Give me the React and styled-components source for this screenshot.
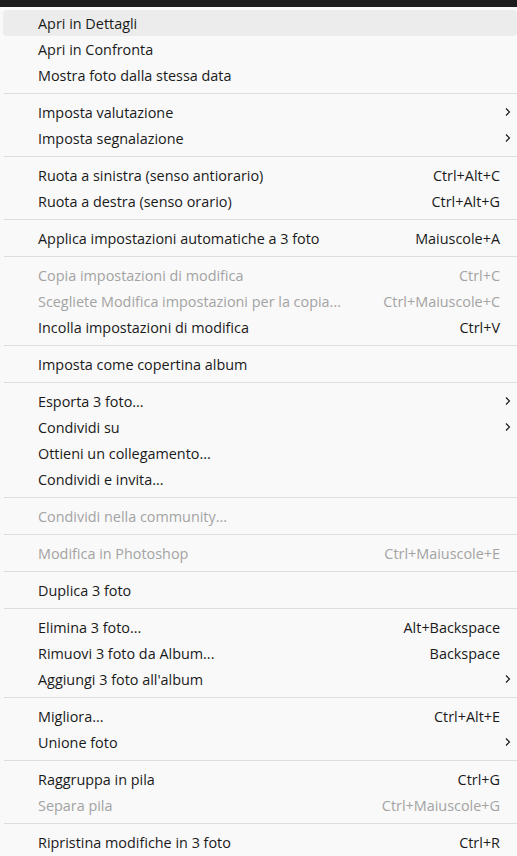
import React from "react";
import styled, { createGlobalStyle } from "styled-components";

const GlobalStyle = createGlobalStyle`
  html, body {
    margin: 0;
    padding: 0;
    background: #f9f9f9;
  }
  body {
    font-family: "Open Sans", "Noto Sans", sans-serif;
  }
`;

const TopBar = styled.div`
  height: 7px;
  background: #1c1c1c;
`;

const Menu = styled.div`
  display: flex;
  flex-direction: column;
  padding-top: 3px;
  background: #f9f9f9;
`;

const Row = styled.div`
  display: flex;
  align-items: center;
  height: 26px;
  margin-left: 3px;
  padding-left: 35px;
  border-radius: 4px;
  font-size: 14.4px;
  color: ${(p) => (p.disabled ? "#a3a3a3" : "#1a1a1a")};
  background: ${(p) => (p.active ? "#ececec" : "transparent")};
`;

const Label = styled.span`
  flex: 1;
  white-space: nowrap;
`;

const Shortcut = styled.span`
  margin-right: 17px;
  white-space: nowrap;
`;

const Chevron = styled.svg`
  width: 8px;
  height: 10px;
  margin-right: 5px;
  color: #1a1a1a;
`;

const Separator = styled.div`
  height: 11px;
  display: flex;
  align-items: center;
  margin-left: 4px;

  &::after {
    content: "";
    flex: 1;
    height: 1px;
    background: #dedede;
  }
`;

const groups = [
  [
    { label: "Apri in Dettagli", active: true },
    { label: "Apri in Confronta" },
    { label: "Mostra foto dalla stessa data" },
  ],
  [
    { label: "Imposta valutazione", sub: true },
    { label: "Imposta segnalazione", sub: true },
  ],
  [
    { label: "Ruota a sinistra (senso antiorario)", key: "Ctrl+Alt+C" },
    { label: "Ruota a destra (senso orario)", key: "Ctrl+Alt+G" },
  ],
  [{ label: "Applica impostazioni automatiche a 3 foto", key: "Maiuscole+A" }],
  [
    { label: "Copia impostazioni di modifica", key: "Ctrl+C", disabled: true },
    {
      label: "Scegliete Modifica impostazioni per la copia...",
      key: "Ctrl+Maiuscole+C",
      disabled: true,
    },
    { label: "Incolla impostazioni di modifica", key: "Ctrl+V" },
  ],
  [{ label: "Imposta come copertina album" }],
  [
    { label: "Esporta 3 foto...", sub: true },
    { label: "Condividi su", sub: true },
    { label: "Ottieni un collegamento..." },
    { label: "Condividi e invita..." },
  ],
  [{ label: "Condividi nella community...", disabled: true }],
  [{ label: "Modifica in Photoshop", key: "Ctrl+Maiuscole+E", disabled: true }],
  [{ label: "Duplica 3 foto" }],
  [
    { label: "Elimina 3 foto...", key: "Alt+Backspace" },
    { label: "Rimuovi 3 foto da Album...", key: "Backspace" },
    { label: "Aggiungi 3 foto all'album", sub: true },
  ],
  [
    { label: "Migliora...", key: "Ctrl+Alt+E" },
    { label: "Unione foto", sub: true },
  ],
  [
    { label: "Raggruppa in pila", key: "Ctrl+G" },
    { label: "Separa pila", key: "Ctrl+Maiuscole+G", disabled: true },
  ],
  [{ label: "Ripristina modifiche in 3 foto", key: "Ctrl+R" }],
];

const ChevronIcon = () => (
  <Chevron viewBox="0 0 8 10">
    <path d="M2 1.5 L5.5 5 L2 8.5" fill="none" stroke="currentColor" strokeWidth="1.2" />
  </Chevron>
);

const MenuItem = ({ item }) => (
  <Row active={item.active} disabled={item.disabled}>
    <Label>{item.label}</Label>
    {item.key && <Shortcut>{item.key}</Shortcut>}
    {item.sub && <ChevronIcon />}
  </Row>
);

export default function App() {
  return (
    <>
      <GlobalStyle />
      <TopBar />
      <Menu>
        {groups.map((group, gi) => (
          <React.Fragment key={gi}>
            {gi > 0 && <Separator />}
            {group.map((item) => (
              <MenuItem key={item.label} item={item} />
            ))}
          </React.Fragment>
        ))}
      </Menu>
    </>
  );
}
